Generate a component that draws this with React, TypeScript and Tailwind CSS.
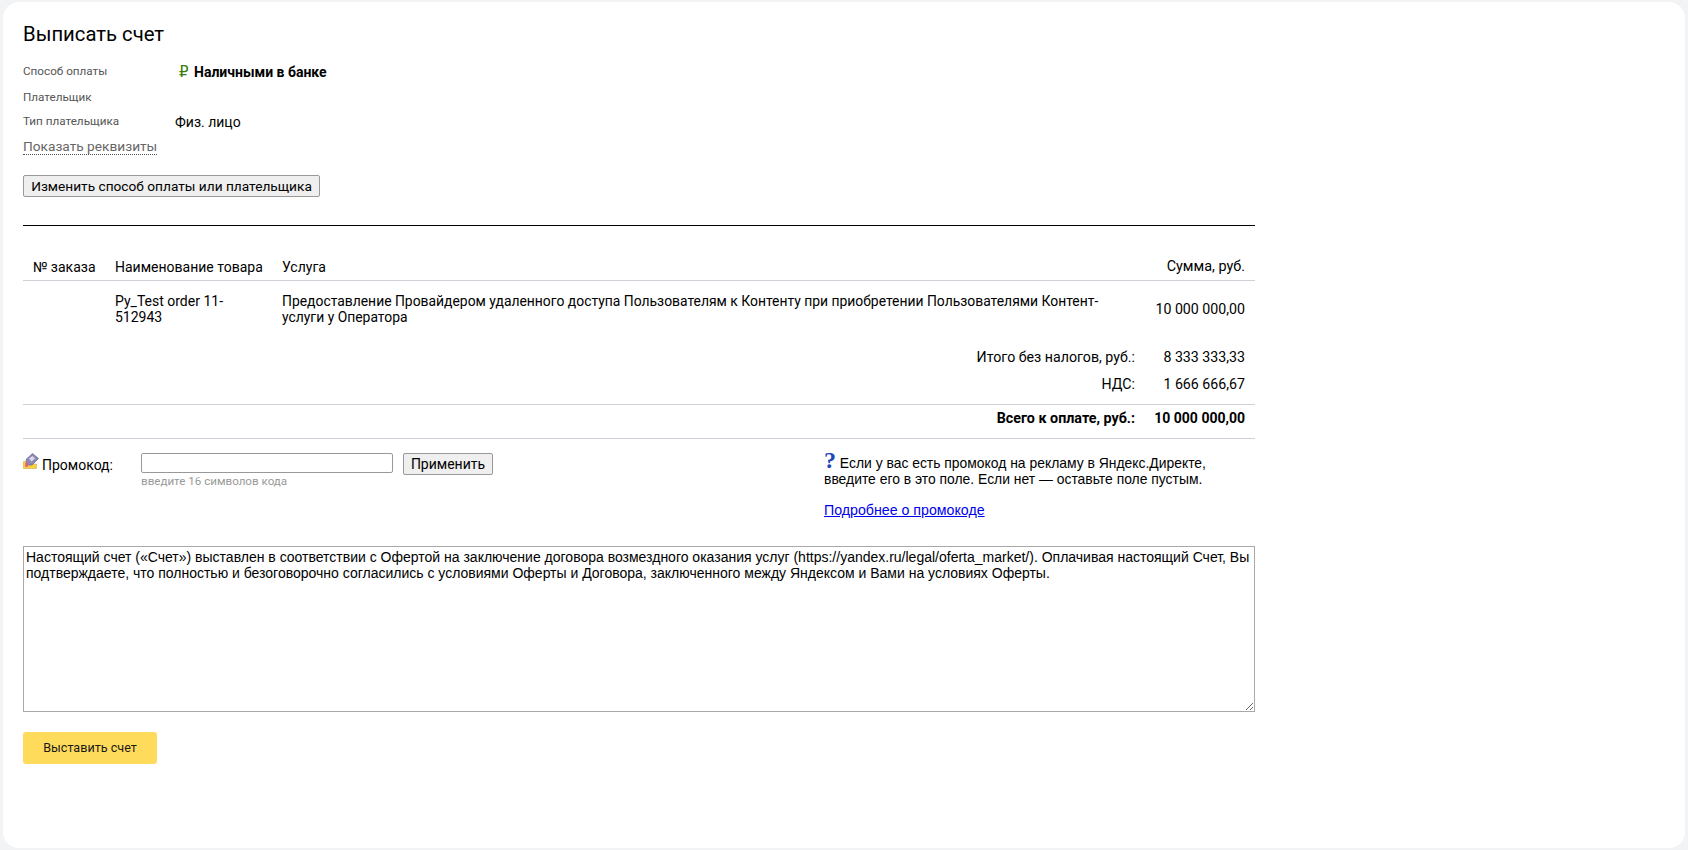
const sans = 'font-["Roboto",sans-serif]'

function PromoIcon() {
  return (
    <svg width="16" height="16" viewBox="0 0 16 16" className="shrink-0">
      <path d="M0.5 8.5 L5 8.5 L7 11 L13.5 11 L13.5 15.5 L0.5 15.5 Z" fill="#f7d046" stroke="#c9a227" strokeWidth="0.5" />
      <path d="M3 6.5 L9.5 0.5 L15.5 5.5 L9 12 L4 12 Z" fill="#8f89b5" stroke="#66628c" strokeWidth="0.7" />
      <path d="M6 5.5 L9.5 3 L12 5.5 L8.5 8.5 Z" fill="#dcd9ea" />
      <rect x="2" y="10" width="3" height="4" fill="#ec5a6e" opacity="0.8" />
    </svg>
  )
}

function InfoRow({ label, children, className }: { label: string; children?: React.ReactNode; className?: string }) {
  return (
    <div className={'flex items-center ' + className}>
      <div className="w-[152px] text-[11.7px] text-[#555]">{label}</div>
      {children}
    </div>
  )
}

export default function App() {
  return (
    <div className={'min-h-[850px] bg-[#f2f3f5] px-[3px] pt-[2px] pb-[2px] ' + sans}>
      <div className="h-[846px] rounded-[16px] bg-white pl-[20px] text-[14px] text-black">
        <div className="w-[1232px] pt-[18px]">
          <h1 className="text-[20.3px] leading-[28px] font-normal">Выписать счет</h1>

          <InfoRow label="Способ оплаты" className="mt-[11px] h-[26px]">
            <span className="ml-[4px] w-[15px] font-['DejaVu_Sans',sans-serif] text-[15px] leading-[16px] text-[#3a7d05]">₽</span>
            <span className="font-bold">Наличными в банке</span>
          </InfoRow>
          <InfoRow label="Плательщик" className="h-[25px]" />
          <InfoRow label="Тип плательщика" className="h-[24px]">
            <span>Физ. лицо</span>
          </InfoRow>
          <div className="mt-[2px] h-[22px]">
            <span className="border-b border-dotted border-[#555] text-[13.7px] leading-[18px] text-[#666]">Показать реквизиты</span>
          </div>

          <button className="mt-[17px] block h-[22px] w-[297px] rounded-[2px] border border-[#999] bg-[#efefef] text-[13.7px] leading-[18px]">
            Изменить способ оплаты или плательщика
          </button>

          <div className="mt-[28px] border-t border-black" />

          <table className="mt-[33px] w-full table-fixed border-collapse text-[14px] leading-[16px]">
            <colgroup>
              <col className="w-[82px]" />
              <col className="w-[167px]" />
              <col />
              <col className="w-[120px]" />
            </colgroup>
            <thead>
              <tr className="border-b border-[#d0d0d8]">
                <th className="px-[10px] pb-[5px] text-left font-normal whitespace-nowrap">№ заказа</th>
                <th className="px-[10px] pb-[5px] text-left font-normal whitespace-nowrap">Наименование товара</th>
                <th className="px-[10px] pb-[5px] text-left font-normal">Услуга</th>
                <th className="px-[10px] pb-[5px] text-right text-[14.4px] font-normal">Сумма, руб.</th>
              </tr>
            </thead>
            <tbody>
              <tr>
                <td className="px-[10px] py-[12px]"></td>
                <td className="px-[10px] py-[12px]">Py_Test order 11-512943</td>
                <td className="px-[10px] py-[12px] text-[13.9px]">
                  Предоставление Провайдером удаленного доступа Пользователям к Контенту при приобретении Пользователями Контент-услуги у Оператора
                </td>
                <td className="px-[10px] py-[12px] text-right text-[14.2px]">10 000 000,00</td>
              </tr>
            </tbody>
          </table>

          <div className="mt-[7px] grid grid-cols-[1fr_120px] text-right text-[14.2px] leading-[16px]">
            <div className="py-[5px]">Итого без налогов, руб.:</div>
            <div className="px-[10px] py-[5px]">8 333 333,33</div>
            <div className="pt-[6px] pb-[5px]">НДС:</div>
            <div className="px-[10px] pt-[6px] pb-[5px]">1 666 666,67</div>
          </div>
          <div className="mt-[7px] grid grid-cols-[1fr_120px] border-y border-[#d0d0d8] pt-[3px] pb-[10px] text-right leading-[20px] font-bold">
            <div className="text-[14.3px]">Всего к оплате, руб.:</div>
            <div className="px-[10px]">10 000 000,00</div>
          </div>

          <div className="mt-[14px] flex h-[93px]">
            <div className="flex w-[118px] items-start gap-[3px] leading-[24px]">
              <PromoIcon />
              <span>Промокод:</span>
            </div>
            <div>
              <div className="flex items-start">
                <input className="h-[20px] w-[252px] rounded-[2px] border border-[#999] bg-white" />
                <button className="ml-[10px] h-[22px] w-[90px] rounded-[2px] border border-[#999] bg-[#efefef] text-[14px] leading-[18px]">
                  Применить
                </button>
              </div>
              <div className="-mt-[2px] text-[11.6px] leading-[16px] text-[#999]">введите 16 символов кода</div>
            </div>
            <div className="ml-[331px] w-[390px] font-['Liberation_Sans',sans-serif] text-[13.9px] leading-[16px]">
              <div className="-mt-[3px]">
                <span className="font-['Liberation_Serif',serif] text-[24px] leading-[20px] font-bold text-[#2046b8]">?</span>{' '}
                Если у вас есть промокод на рекламу в Яндекс.Директе, введите его в это поле. Если нет — оставьте поле пустым.
              </div>
              <a href="#" className="mt-[15px] block text-[14.2px] text-[#0000ee] underline">Подробнее о промокоде</a>
            </div>
          </div>

          <textarea
            className="block h-[166px] w-full border border-[#a9a9a9] px-[2px] py-[2px] font-['Liberation_Sans',sans-serif] text-[14px] leading-[16px] text-black"
            readOnly
            defaultValue="Настоящий счет («Счет») выставлен в соответствии с Офертой на заключение договора возмездного оказания услуг (https://yandex.ru/legal/oferta_market/). Оплачивая настоящий Счет, Вы подтверждаете, что полностью и безоговорочно согласились с условиями Оферты и Договора, заключенного между Яндексом и Вами на условиях Оферты."
          />

          <button className="mt-[20px] block h-[32px] w-[134px] rounded-[3px] bg-[#ffdb5c] text-[12.6px] text-[#1a1a1a]">
            Выставить счет
          </button>
        </div>
      </div>
    </div>
  )
}
